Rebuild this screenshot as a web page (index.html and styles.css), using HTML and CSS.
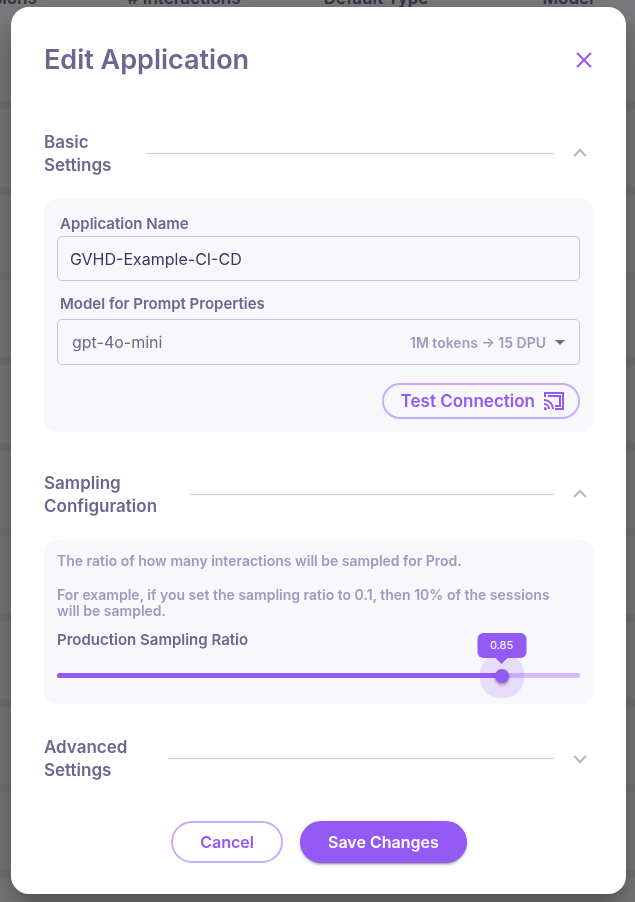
FILE: index.html
```html
<!DOCTYPE html>
<html lang="en">
<head>
<meta charset="UTF-8">
<meta name="viewport" content="width=device-width, initial-scale=1.0">
<title>Edit Application</title>
<link rel="stylesheet" href="styles.css">
</head>
<body>

<div class="page">
  <table class="apps-table">
    <thead>
      <tr><th># Sessions</th><th># Interactions</th><th>Default Type</th><th>Model</th></tr>
    </thead>
    <tbody>
      <tr><td colspan="4"></td></tr>
      <tr><td colspan="4"></td></tr>
      <tr><td colspan="4"></td></tr>
      <tr><td colspan="4"></td></tr>
      <tr><td colspan="4"></td></tr>
      <tr><td colspan="4"></td></tr>
      <tr><td colspan="4"></td></tr>
      <tr><td colspan="4"></td></tr>
      <tr><td colspan="4"></td></tr>
      <tr><td colspan="4"></td></tr>
      <tr><td colspan="4"></td></tr>
    </tbody>
  </table>
</div>

<div class="backdrop">
  <form class="modal" role="dialog" aria-labelledby="modalTitle" onsubmit="return false;">
    <header class="modal-header">
      <h1 id="modalTitle">Edit Application</h1>
      <button type="button" class="close" aria-label="Close">
        <svg width="20" height="20" viewBox="0 0 20 20"><path d="M3 3L17 17M17 3L3 17"/></svg>
      </button>
    </header>

    <button type="button" class="section-header" aria-expanded="true">
      <span class="section-title basic">Basic Settings</span>
      <span class="line"></span>
      <svg class="chevron" width="28" height="28" viewBox="0 0 28 28"><path d="M8 16L14 10L20 16"/></svg>
    </button>
    <section class="panel">
      <div class="field">
        <label for="appName">Application Name</label>
        <input type="text" id="appName" name="appName" value="GVHD-Example-CI-CD">
      </div>
      <div class="field">
        <label for="model">Model for Prompt Properties</label>
        <div class="select-box">
          <select id="model" name="model">
            <option>gpt-4o-mini</option>
          </select>
          <span class="select-hint">1M tokens → 15 DPU
            <svg width="10" height="5" viewBox="0 0 10 5"><path d="M0 0H10L5 5Z"/></svg>
          </span>
        </div>
      </div>
      <button type="button" class="btn btn-outline btn-test">Test Connection
        <svg width="22" height="20" viewBox="0 0 22 20">
          <path d="M2 6V2H20V18H12M5 5H17V15H12M1 9A9 9 0 0 1 10 18M1 13A5 5 0 0 1 6 18"/>
          <path class="dot" d="M1 16A3 3 0 0 1 4 19H1Z"/>
        </svg>
      </button>
    </section>

    <button type="button" class="section-header" aria-expanded="true">
      <span class="section-title sampling">Sampling Configuration</span>
      <span class="line"></span>
      <svg class="chevron" width="28" height="28" viewBox="0 0 28 28"><path d="M8 16L14 10L20 16"/></svg>
    </button>
    <section class="panel panel-sampling">
      <p>The ratio of how many interactions will be sampled for Prod.</p>
      <p>For example, if you set the sampling ratio to 0.1, then 10% of the sessions will be sampled.</p>
      <label for="ratio">Production Sampling Ratio</label>
      <div class="slider">
        <span class="slider-fill" style="width: 85%"></span>
        <span class="slider-halo" style="left: 85%"></span>
        <input type="range" id="ratio" name="ratio" min="0" max="1" step="0.01" value="0.85">
        <output class="slider-value" for="ratio" style="left: 85%">0.85</output>
      </div>
    </section>

    <button type="button" class="section-header" aria-expanded="false">
      <span class="section-title advanced">Advanced Settings</span>
      <span class="line"></span>
      <svg class="chevron" width="28" height="28" viewBox="0 0 28 28"><path d="M8 11L14 17L20 11"/></svg>
    </button>

    <footer class="actions">
      <button type="button" class="btn btn-outline">Cancel</button>
      <button type="submit" class="btn btn-primary">Save Changes</button>
    </footer>
  </form>
</div>

</body>
</html>
```
FILE: styles.css
```css
* {
  box-sizing: border-box;
}
body {
  margin: 0;
  font-family: Inter, "Open Sans", sans-serif;
  color: #6a6790;
  background-color: #f8f8fc;
}
h1, p {
  margin: 0;
}
button, input, select {
  font-family: inherit;
}
button {
  cursor: pointer;
}
svg {
  fill: none;
  flex: none;
}

/* Applications table behind the dialog */
.page {
  position: fixed;
  inset: 0;
  overflow: hidden;
}
.apps-table {
  width: 768px;
  height: calc(100vh + 89px);
  margin: -28px 0 0 -104px;
  table-layout: fixed;
  border-spacing: 0 8px;
  background-color: #e4e4ee;
}
.apps-table thead {
  background-color: #f8f8fc;
  box-shadow: 0 0 0 8px #f8f8fc;
}
.apps-table th {
  height: 36px;
  padding: 0;
  font-size: 17px;
  font-weight: 600;
  color: #6a6790;
}
.apps-table td {
  padding: 0;
  background-color: #f2f2f2;
}

.backdrop {
  position: relative;
  min-height: 100vh;
  padding: 7px 9px 8px 11px;
  background-color: rgba(0, 0, 0, 0.5);
}
.modal {
  padding: 32px 32px 31px 33px;
  background-color: #fff;
  border-radius: 18px;
  box-shadow: 0 11px 15px -7px rgba(0, 0, 0, 0.2), 0 24px 38px 3px rgba(0, 0, 0, 0.14), 0 9px 46px 8px rgba(0, 0, 0, 0.12);
}
.modal-header {
  display: flex;
  align-items: center;
  justify-content: space-between;
  height: 42px;
  margin-bottom: 50px;
}
.modal-header h1 {
  font-size: 27px;
  font-weight: 600;
  line-height: 36px;
}
.close {
  display: flex;
  padding: 0;
  border: 0;
  background: none;
}
.close path {
  stroke: #9259f5;
  stroke-width: 2;
}

.section-header {
  display: flex;
  align-items: center;
  width: 100%;
  padding: 0;
  border: 0;
  background: none;
  color: #6a6790;
  text-align: left;
}
.section-title {
  flex: none;
  padding-right: 24px;
  font-size: 17px;
  font-weight: 600;
  line-height: 23px;
}
.basic {
  width: 102px;
}
.sampling {
  width: 146px;
}
.advanced {
  width: 124px;
}
.line {
  flex: 1;
  height: 1px;
  margin-bottom: 2px;
  background-color: #c9c6dd;
}
.chevron {
  margin-left: 12px;
}
.chevron path {
  stroke: #b0bac5;
  stroke-width: 2;
}

.panel {
  display: flex;
  flex-direction: column;
  margin: 22px 0 40px;
  padding: 13px 14px 13px 13px;
  background-color: #f8f7fc;
  border-radius: 13px;
}
.field {
  margin-bottom: 11px;
}
label {
  display: block;
  font-size: 15px;
  font-weight: 600;
  line-height: 24px;
}
.field label {
  padding-left: 3px;
}
input[type="text"], select {
  width: 100%;
  height: 45px;
  padding: 0 12px;
  border: 1px solid #c9c6dd;
  border-radius: 5px;
  background: none;
  color: #3b3861;
  font-size: 16px;
}
.select-box {
  display: grid;
  align-items: center;
  margin: 3px 0 7px;
}
.select-box > * {
  grid-area: 1 / 1;
}
select {
  height: 46px;
  padding: 0 14px;
  appearance: none;
  color: #6a6790;
}
.select-hint {
  display: flex;
  align-items: center;
  gap: 9px;
  justify-self: end;
  margin-right: 15px;
  color: #9d9abf;
  font-size: 14px;
  font-weight: 600;
  pointer-events: none;
}
.select-hint path {
  fill: #707070;
}

.btn {
  display: flex;
  align-items: center;
  justify-content: center;
  height: 42px;
  padding: 0 27px;
  border: 2px solid #9259f5;
  border-radius: 21px;
  font-size: 16px;
  font-weight: 600;
}
.btn-outline {
  border-color: #c8acfa;
  background: none;
  color: #9259f5;
}
.btn-primary {
  padding: 0 26px;
  background-color: #9259f5;
  color: #fff;
  box-shadow: 0 3px 1px -2px rgba(0, 0, 0, 0.2), 0 2px 2px rgba(0, 0, 0, 0.14), 0 1px 5px rgba(0, 0, 0, 0.12);
}
.btn-test {
  align-self: flex-end;
  gap: 8px;
  height: 36px;
  padding: 0 13px 0 17px;
  font-size: 17px;
}
.btn-test path {
  stroke: #9259f5;
  stroke-width: 2;
}
.btn-test .dot {
  fill: #9259f5;
  stroke: none;
}

.panel-sampling {
  margin-bottom: 32px;
}
.panel-sampling p {
  margin-bottom: 18px;
  padding-right: 16px;
  color: #9d9abf;
  font-size: 14px;
  font-weight: 600;
  line-height: 16px;
}
.panel-sampling p + p {
  margin-bottom: 9px;
}
.slider {
  position: relative;
  height: 5px;
  margin: 21px 0 13px;
  border-radius: 3px;
  background-color: #d2bdfa;
}
.slider-fill {
  display: block;
  height: 100%;
  border-radius: 3px;
  background-color: #9259f5;
}
.slider-halo {
  position: absolute;
  top: 50%;
  width: 44px;
  height: 44px;
  border-radius: 20px;
  background-color: rgba(146, 89, 245, 0.16);
  transform: translate(-50%, -50%);
}
/* widened by half a thumb on each side so the thumb centre follows the track */
.slider input {
  position: absolute;
  top: -5px;
  left: -7px;
  width: calc(100% + 14px);
  height: 15px;
  margin: 0;
  appearance: none;
  background: none;
}
.slider input::-webkit-slider-thumb {
  appearance: none;
  width: 14px;
  height: 14px;
  border-radius: 50%;
  background-color: #9259f5;
  box-shadow: 0 2px 3px rgba(0, 0, 0, 0.35);
}
.slider-value {
  position: absolute;
  bottom: 20px;
  width: 49px;
  border-radius: 6px;
  background-color: #9259f5;
  color: #fff;
  font-size: 11px;
  line-height: 25px;
  text-align: center;
  transform: translateX(-50%);
}
.slider-value::after {
  content: "";
  position: absolute;
  top: 100%;
  left: 50%;
  margin-left: -6px;
  border: 6px solid transparent;
  border-top-color: #9259f5;
}

.actions {
  display: flex;
  justify-content: center;
  gap: 17px;
  margin-top: 39px;
}
```
